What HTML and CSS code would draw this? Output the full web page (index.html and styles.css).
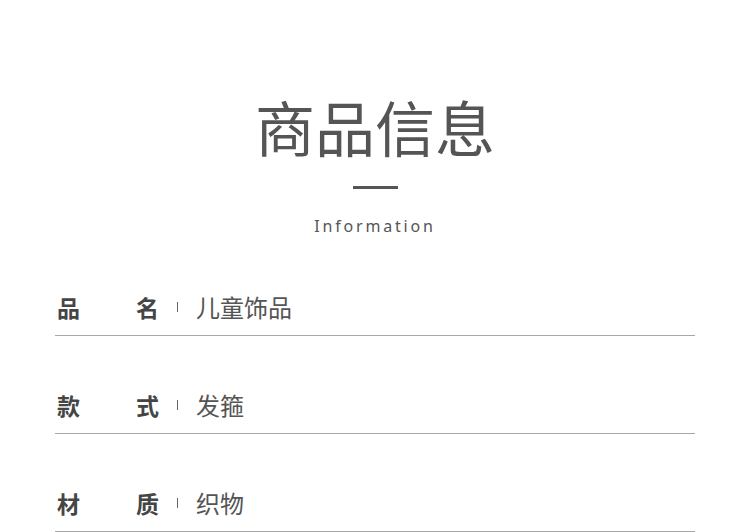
FILE: index.html
```html
<!DOCTYPE html>
<html lang="zh">
<head>
<meta charset="utf-8">
<link rel="stylesheet" href="styles.css">
</head>
<body>
<div class="page">
  <header class="head">
    <h1 class="title">商品信息</h1>
    <div class="bar"></div>
    <div class="sub">Information</div>
  </header>
  <div class="rows">
    <div class="row">
      <div class="label"><span>品</span><span>名</span></div>
      <span class="sep"></span>
      <div class="value">儿童饰品</div>
    </div>
    <div class="row">
      <div class="label"><span>款</span><span>式</span></div>
      <span class="sep"></span>
      <div class="value">发箍</div>
    </div>
    <div class="row">
      <div class="label"><span>材</span><span>质</span></div>
      <span class="sep"></span>
      <div class="value">织物</div>
    </div>
  </div>
</div>
</body>
</html>
```
FILE: styles.css
```css
html, body {
  margin: 0;
  padding: 0;
  background: #fff;
}
body {
  font-family: "Noto Sans CJK SC", "Noto Sans", sans-serif;
  color: #555;
  width: 750px;
  height: 532px;
  overflow: hidden;
}
.page {
  padding: 0 55px;
}
.head {
  display: flex;
  flex-direction: column;
  align-items: center;
  padding-top: 96px;
}
.title {
  margin: 0;
  font-size: 60px;
  line-height: 60px;
  font-weight: 400;
  color: #555;
  letter-spacing: 0;
}
.bar {
  width: 45px;
  height: 3px;
  background: #555;
  margin-top: 30px;
}
.sub {
  margin-top: 27px;
  font-family: "Noto Sans", sans-serif;
  font-size: 16px;
  line-height: 20px;
  letter-spacing: 2.8px;
  color: #555;
}
.rows {
  display: flex;
  flex-direction: column;
}
.row {
  display: flex;
  align-items: center;
  height: 30px;
  padding-top: 54px;
  padding-bottom: 13px;
  border-bottom: 1px solid #a8a8a8;
}
.rows .row:first-child {
  padding-top: 56px;
}
.label {
  width: 102px;
  margin-left: 2px;
  display: flex;
  justify-content: space-between;
  font-size: 23px;
  font-weight: 700;
  color: #454545;
  line-height: 30px;
}
.sep {
  width: 1px;
  height: 10px;
  background: #666;
  margin-left: 18px;
  margin-right: 18px;
}
.value {
  font-size: 24px;
  line-height: 30px;
  color: #555;
}
```
